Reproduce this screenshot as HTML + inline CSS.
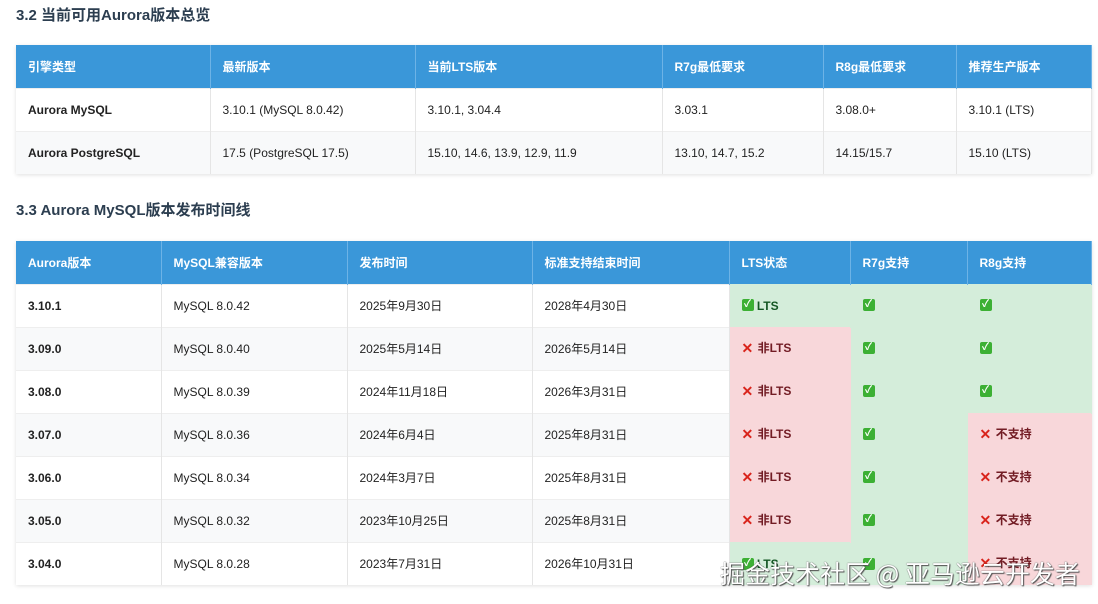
<!DOCTYPE html>
<html><head><meta charset="utf-8"><style>
body{margin:0;width:1098px;height:604px;background:#fff;overflow:hidden;font-family:"Liberation Sans","Noto Sans CJK SC",sans-serif;color:#222;position:relative}
h3{position:absolute;left:16px;margin:0;font-size:15px;font-weight:bold;color:#2c3e50;line-height:20px}
table{position:absolute;left:16px;border-collapse:collapse;table-layout:fixed;font-size:12px;box-shadow:0 1px 4px rgba(0,0,0,.12)}
th{background:#3a97d9;color:#fff;text-align:left;font-weight:bold;height:43px;padding:0 0 0 12px;border-right:1px solid #6db3e6;box-sizing:border-box}
td{height:43px;padding:0 0 0 12px;border-right:1px solid #e5e5e5;border-top:1px solid #eee;box-sizing:border-box;background:#fff;line-height:16px}
tr:nth-child(odd) td{background:#f8f9fa}
td.b{font-weight:bold}
td.g{background:#d4edda!important;color:#155724;font-weight:bold;border-right-color:#d4edda;border-top-color:#d4edda}
td.r{background:#f8d7da!important;color:#721c24;font-weight:bold;border-right-color:#f8d7da;border-top-color:#f8d7da}
.ck{display:inline-block;width:12px;height:12px;background:#3cb034;border-radius:2px;color:#fff;font-size:10px;line-height:12px;text-align:center;vertical-align:middle;font-weight:bold;position:relative;top:-1px}
.x{color:#d9241c;font-size:14px;font-weight:bold;margin-right:1px;vertical-align:middle;position:relative;top:-1px}
.wm{position:absolute;left:720px;top:555px;font-size:25px;color:#fff;font-family:"Noto Sans CJK SC",sans-serif;text-shadow:0 0 1px #333,1px 1px 1px #555}
</style></head><body>
<h3 style="top:6px">3.2 当前可用Aurora版本总览</h3>
<table style="top:45px;width:1075px">
<colgroup><col style="width:194px"><col style="width:205px"><col style="width:247px"><col style="width:161px"><col style="width:133px"><col style="width:135px"></colgroup>
<tr><th>引擎类型</th><th>最新版本</th><th>当前LTS版本</th><th>R7g最低要求</th><th>R8g最低要求</th><th>推荐生产版本</th></tr>
<tr><td class="b">Aurora MySQL</td><td>3.10.1 (MySQL 8.0.42)</td><td>3.10.1, 3.04.4</td><td>3.03.1</td><td>3.08.0+</td><td>3.10.1 (LTS)</td></tr>
<tr><td class="b">Aurora PostgreSQL</td><td>17.5 (PostgreSQL 17.5)</td><td>15.10, 14.6, 13.9, 12.9, 11.9</td><td>13.10, 14.7, 15.2</td><td>14.15/15.7</td><td>15.10 (LTS)</td></tr>
</table>
<h3 style="top:201px">3.3 Aurora MySQL版本发布时间线</h3>
<table style="top:241px;width:1075px">
<colgroup><col style="width:145px"><col style="width:186px"><col style="width:185px"><col style="width:197px"><col style="width:121px"><col style="width:117px"><col style="width:124px"></colgroup>
<tr><th>Aurora版本</th><th>MySQL兼容版本</th><th>发布时间</th><th>标准支持结束时间</th><th>LTS状态</th><th>R7g支持</th><th>R8g支持</th></tr>
<tr><td class="b">3.10.1</td><td>MySQL 8.0.42</td><td>2025年9月30日</td><td>2028年4月30日</td><td class="g"><span class="ck">✓</span> LTS</td><td class="g"><span class="ck">✓</span></td><td class="g"><span class="ck">✓</span></td></tr>
<tr><td class="b">3.09.0</td><td>MySQL 8.0.40</td><td>2025年5月14日</td><td>2026年5月14日</td><td class="r"><span class="x">✕</span> 非LTS</td><td class="g"><span class="ck">✓</span></td><td class="g"><span class="ck">✓</span></td></tr>
<tr><td class="b">3.08.0</td><td>MySQL 8.0.39</td><td>2024年11月18日</td><td>2026年3月31日</td><td class="r"><span class="x">✕</span> 非LTS</td><td class="g"><span class="ck">✓</span></td><td class="g"><span class="ck">✓</span></td></tr>
<tr><td class="b">3.07.0</td><td>MySQL 8.0.36</td><td>2024年6月4日</td><td>2025年8月31日</td><td class="r"><span class="x">✕</span> 非LTS</td><td class="g"><span class="ck">✓</span></td><td class="r"><span class="x">✕</span> 不支持</td></tr>
<tr><td class="b">3.06.0</td><td>MySQL 8.0.34</td><td>2024年3月7日</td><td>2025年8月31日</td><td class="r"><span class="x">✕</span> 非LTS</td><td class="g"><span class="ck">✓</span></td><td class="r"><span class="x">✕</span> 不支持</td></tr>
<tr><td class="b">3.05.0</td><td>MySQL 8.0.32</td><td>2023年10月25日</td><td>2025年8月31日</td><td class="r"><span class="x">✕</span> 非LTS</td><td class="g"><span class="ck">✓</span></td><td class="r"><span class="x">✕</span> 不支持</td></tr>
<tr><td class="b">3.04.0</td><td>MySQL 8.0.28</td><td>2023年7月31日</td><td>2026年10月31日</td><td class="g"><span class="ck">✓</span> LTS</td><td class="g"><span class="ck">✓</span></td><td class="r"><span class="x">✕</span> 不支持</td></tr>
</table>
<div class="wm">掘金技术社区 @ 亚马逊云开发者</div>
</body></html>
